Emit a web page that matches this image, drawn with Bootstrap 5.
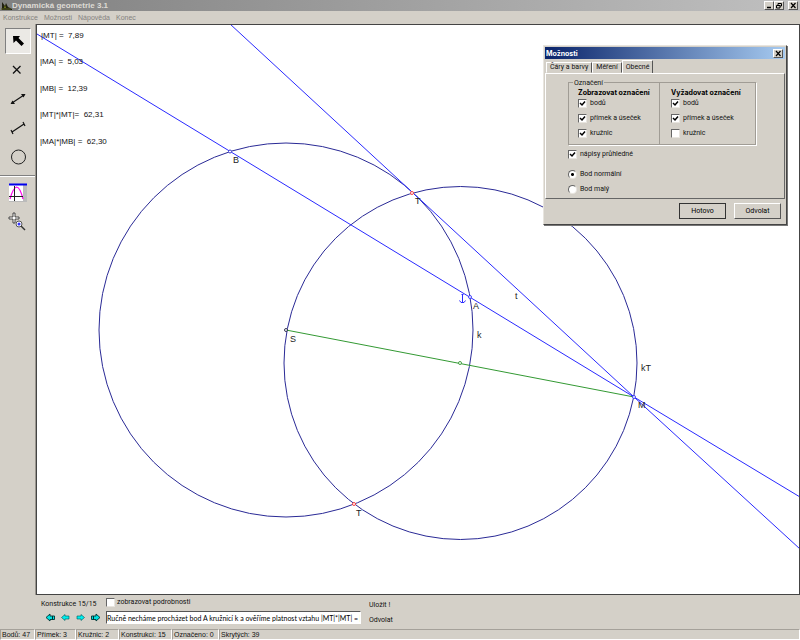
<!DOCTYPE html>
<html lang="cs">
<head>
<meta charset="utf-8">
<meta name="viewport" content="width=device-width, initial-scale=1">
<title>Dynamická geometrie 3.1</title>
<link href="https://cdn.jsdelivr.net/npm/bootstrap@5.3.0/dist/css/bootstrap.min.css" rel="stylesheet">
<script src="https://cdn.jsdelivr.net/npm/bootstrap@5.3.0/dist/js/bootstrap.bundle.min.js"></script>
<style>
:root{--face:#d4d0c8;--shade:#808080;--ink:#111}
body{font-family:"Liberation Sans",Arial,sans-serif;font-size:7px;line-height:9px;color:var(--ink);background:var(--face)}
button,input{font-family:inherit;font-size:7px;line-height:9px;color:inherit}
svg{display:block}
.raised{background:var(--face);border:1px solid;border-color:#fff #555 #555 #fff;border-radius:0}
.app-title{height:11px;font-size:8px;background:linear-gradient(90deg,#808080,#c0c0c0);color:#dedbd5;padding:0 2px 0 1px}
.win-btn{width:10px;height:9px;padding:0}
.app-menu{height:13px;padding:2px 3px;gap:6px}
.app-menu a{color:#84827f;text-decoration:none}
.tools{width:36px;border-right:1px solid #9a968f;padding-top:4px;gap:3px}
.tool{width:26px;height:26px;padding:0;margin-left:5px;border:1px solid transparent;background:none}
.tool.pressed{background:#ebe9e5;border-color:#808080 #fff #fff #808080}
.tool-sep{border-top:1px solid var(--shade);border-bottom:1px solid #fff;margin-top:2px}
.board{background:#fff;border:1px solid #444}
.board text{font-size:9px;fill:#222;white-space:pre}
.board .measure{font-size:8px;fill:#111}
.steps,.options{font-family:Roboto,"Liberation Sans",sans-serif}
.steps{height:34px;padding:3px 0 0 41px;gap:11px}
.step-nav{width:54px;padding-top:2px}
.nav-btn{border:0;background:none;padding:0;width:11px;height:9px}
.step-input{font-family:Lato,"Liberation Sans",sans-serif;width:255px;height:13px;padding:0;background:#fff;border:1px solid;border-color:#555 #fff #fff #555;border-radius:0;color:#000}
.tick-row{gap:2px}
.step-acts{padding:3px 0 0;margin-left:-3px;gap:6px}
.flat{border:0;background:none;padding:0}
.tick{appearance:none;width:9px;height:9px;margin:0;flex:none;background:#fff;border:1px solid;border-color:#666 #e8e5df #e8e5df #666}
.tick:checked{background:#fff url("data:image/svg+xml,%3Csvg xmlns='http://www.w3.org/2000/svg' viewBox='0 0 7 7'%3E%3Cpath d='M1 3L3 5L6 1.5' fill='none' stroke='%23000' stroke-width='1.5'/%3E%3C/svg%3E") center/7px no-repeat}
.tick[type=radio]{border-radius:50%}
.tick[type=radio]:checked{background:radial-gradient(circle,#000 1px,#fff 2px)}
.status{height:11px}
.status span{border:1px solid;border-color:#a5a19a #fff #fff #a5a19a;padding:0 1px;white-space:nowrap}
.w-a{width:35px}.w-b{width:41px}.w-c{width:43px}.w-d{width:53px}.w-e{width:47px}
.options{position:absolute;top:45px;right:13px;width:244px;height:180px;background:var(--face);border:1px solid;border-color:#e8e5df #444 #444 #e8e5df;box-shadow:1px 1px 0 #777;padding:1px}
.options-title,.col-head{font-family:Inter,"Liberation Sans",sans-serif}
.options-title{height:12px;background:linear-gradient(90deg,#0a246a,#a6caf0);color:#fff;padding:0 2px 0 1px}
.tabs{height:13px;padding-left:1px;margin-top:1px}
.tab-btn{height:11px;padding:0 3px;border:1px solid;border-color:#fff #555 transparent #fff;background:none;white-space:nowrap}
.tab-btn.on{height:13px;border-bottom:0;background:var(--face)}
.page{height:126px;border:1px solid;border-color:#fff #666 #666 #fff;padding:4px 28px 0 22px}
.group{border:1px solid #a09c95;box-shadow:1px 1px 0 #fff;height:63px;margin:4px 0 2px}
.group legend{font-size:7px;line-height:8px;width:auto;float:left;margin:-4px 0 0 4px;padding:0 1px;background:var(--face)}
.cols{clear:both}
.group-col{padding:0 0 0 9px}
.group-col.second{border-left:1px solid #a09c95;width:96px;margin-top:-4px;padding:4px 0 3px 11px}
.opt{display:flex;align-items:center;gap:3px;height:15px}
.col-head{font-weight:700;color:#000;height:9px;white-space:nowrap;margin-top:1px;margin-bottom:-1px}
.sizes{margin-top:5px}
.act{width:47px;height:16px;padding:0;color:#000}
.act.main{outline:1px solid #333;outline-offset:-1px;border-color:#333}
</style>
</head>
<body class="d-flex flex-column min-vh-100 position-relative">
<header>
  <div class="app-title d-flex align-items-center">
    <svg width="11" height="10" viewBox="0 0 11 10"><path d="M1 9V1L4 5L5 2L7 6L11 8V9Z" fill="#202010"/><path d="M3 7L4 4L5 7Z" fill="#778018"/><path d="M0 8H10" stroke="#555b20"/></svg>
    <strong>Dynamická geometrie 3.1</strong>
    <div class="d-flex ms-auto">
      <button class="win-btn raised" aria-label="Minimalizovat"><svg width="8" height="7"><path d="M2 5.500H6" stroke="#000" stroke-width="1.500"/></svg></button>
      <button class="win-btn raised" aria-label="Obnovit"><svg width="8" height="7"><path d="M3 3V1.500H6.500V4H5M1.500 3.500H5V6H1.500Z" fill="none" stroke="#000"/></svg></button>
      <button class="win-btn raised ms-1" aria-label="Zavřít"><svg width="8" height="7"><path d="M2 1L6.500 6M6.500 1L2 6" stroke="#000" stroke-width="1.200"/></svg></button>
    </div>
  </div>
  <nav class="app-menu d-flex"><a href="#">Konstrukce</a><a href="#">Možnosti</a><a href="#">Nápověda</a><a href="#">Konec</a></nav>
</header>
<main class="d-flex flex-fill">
  <aside class="tools d-flex flex-column flex-shrink-0">
    <button class="tool pressed" aria-label="Výběr"><svg width="24" height="24"><path d="M7 7H14L12.500 9L18 14.500L15.500 17L10 11.500L7.500 14Z" fill="#000"/></svg></button>
    <button class="tool" aria-label="Bod"><svg width="24" height="24"><path d="M7 8L14.500 15.500M14.500 8L7 15.500" stroke="#111" stroke-width="1.300"/></svg></button>
    <button class="tool" aria-label="Přímka"><svg width="24" height="24"><path d="M6 16L18 8" stroke="#111" stroke-width="1.200"/><path d="M4.500 17L6.500 13.500L9 17ZM19.500 7L17.500 10.500L15 7Z" fill="#111"/></svg></button>
    <button class="tool" aria-label="Úsečka"><svg width="24" height="24"><path d="M6 16L18 8M5 14L7 18M17 6L19 10" fill="none" stroke="#111" stroke-width="1.200"/></svg></button>
    <button class="tool" aria-label="Kružnice"><svg width="24" height="24"><circle cx="12.500" cy="12" r="7" fill="none" stroke="#222"/></svg></button>
    <div class="tool-sep"></div>
    <button class="tool" aria-label="Graf"><svg width="24" height="24"><path d="M3 3H21V21H3Z" fill="#bbb"/><path d="M3 4H17V20H3Z" fill="#fff"/><path d="M3 3.500H21" stroke="#00e" stroke-width="2"/><path d="M4 18Q7 7 10.500 6Q14 6 17 18" fill="none" stroke="#f0e" stroke-width="1.200"/><path d="M3 15.500H17M8.500 5V20" stroke="#222"/></svg></button>
    <button class="tool" aria-label="Lupa"><svg width="24" height="24"><path d="M7 3H9V7H13V9H9V13H7V9H3V7H7Z" fill="#fff" stroke="#222" stroke-width=".8"/><circle cx="13" cy="14" r="3" fill="#fff" stroke="#555"/><circle cx="13" cy="14" r="1.500" fill="#33f"/><path d="M15 16L19 20" stroke="#333" stroke-width="1.400"/></svg></button>
  </aside>
  <section class="board flex-fill" aria-label="Nákresna">
    <svg width="100%" viewBox="37 25 762 569">
      <g fill="none" stroke="#2a2a96"><circle cx="286" cy="330" r="187"/><circle cx="460.500" cy="363" r="176.500"/></g>
      <g stroke="#2a2aff"><path d="M37 34L634 397L800 497M230 24L412 192L634 397L800 549" fill="none"/><path d="M462.500 294V302M459.500 300.500L461 302.500H464L465.500 300.500M461.500 294.500H463.500" fill="none"/></g>
      <path d="M286 330L634 397" stroke="#339933"/>
      <g fill="#fff" stroke-width=".9"><circle cx="230" cy="151.500" r="1.500" stroke="#33c"/><circle cx="470" cy="297" r="1.500" stroke="#33f"/><circle cx="286" cy="330" r="1.500" stroke="#224"/><circle cx="460" cy="363" r="1.500" stroke="#393"/><circle cx="634" cy="397" r="1.500" stroke="#33f"/><circle cx="412" cy="193" r="1.500" stroke="#f33"/><circle cx="354" cy="504" r="1.500" stroke="#f33"/></g>
      <text class="measure" x="41" y="38">|MT| =  7,89</text><text class="measure" x="40" y="64">|MA| =  5,03</text><text class="measure" x="40" y="91">|MB| =  12,39</text><text class="measure" x="40" y="117">|MT|*|MT|=  62,31</text><text class="measure" x="40" y="144">|MA|*|MB| =  62,30</text>
      <text x="233" y="163">B</text><text x="415" y="204">T</text><text x="473" y="309">A</text><text x="477" y="338">k</text><text x="515" y="299">t</text><text x="290" y="342">S</text><text x="641" y="371">kT</text><text x="638" y="408">M</text><text x="356" y="516">T</text>
    </svg>
  </section>
</main>
<section class="steps d-flex">
  <div class="step-nav">
    <div class="text-nowrap" id="stepCount">Konstrukce 15/15</div>
    <div class="d-flex gap-1 pt-1 ps-1">
      <button class="nav-btn" aria-label="První"><svg width="11" height="9"><path d="M1 4.500L5 1V3H9.500V6.500H5V8Z" fill="#00e0e0" stroke="#033" stroke-width=".9"/><path d="M7.500 3V6.500" stroke="#033"/></svg></button>
      <button class="nav-btn" aria-label="Předchozí"><svg width="11" height="9"><path d="M1.500 4.500L5 1.500V3H9V6H5V7.500Z" fill="#0ee" stroke="#055" stroke-width=".6"/></svg></button>
      <button class="nav-btn" aria-label="Další"><svg width="11" height="9"><path d="M9.500 4.500L6 1.500V3H2V6H6V7.500Z" fill="#0ee" stroke="#055" stroke-width=".6"/></svg></button>
      <button class="nav-btn" aria-label="Poslední"><svg width="11" height="9"><path d="M10 4.500L6 1V3H1.500V6.500H6V8Z" fill="#00e0e0" stroke="#033" stroke-width=".9"/><path d="M3.500 3V6.500" stroke="#033"/></svg></button>
    </div>
  </div>
  <div>
    <div class="tick-row d-flex align-items-center"><input class="tick" type="checkbox" id="detail"><label for="detail">zobrazovat podrobnosti</label></div>
    <input class="step-input d-block mt-1" aria-labelledby="stepCount" value="Ručně necháme procházet bod A kružnicí k a ověříme platnost vztahu |MT|*|MT| = |">
  </div>
  <div class="step-acts d-flex flex-column align-items-start"><button class="flat">Uložit !</button><button class="flat">Odvolat</button></div>
</section>
<footer class="status d-flex"><span class="w-a">Bodů: 47</span><span class="w-b">Přímek: 3</span><span class="w-c">Kružnic: 2</span><span class="w-d">Konstrukcí: 15</span><span class="w-e">Označeno: 0</span><span class="flex-fill">Skrytých: 39</span></footer>

<div class="options" role="dialog" aria-labelledby="optTitle">
  <div class="options-title d-flex align-items-center"><strong id="optTitle">Možnosti</strong><button class="win-btn raised ms-auto" aria-label="Zavřít okno"><svg width="8" height="7"><path d="M2 1L6.500 6M6.500 1L2 6" stroke="#000" stroke-width="1.200"/></svg></button></div>
  <div class="tabs d-flex align-items-end" role="tablist"><button class="tab-btn" role="tab">Čáry a barvy</button><button class="tab-btn" role="tab">Měření</button><button class="tab-btn on" role="tab" aria-selected="true">Obecné</button></div>
  <div class="page">
    <fieldset class="group"><legend>Označení</legend>
      <div class="cols d-flex">
        <div class="group-col flex-fill"><div class="col-head">Zobrazovat označení</div>
          <label class="opt"><input class="tick" type="checkbox" checked>bodů</label><label class="opt"><input class="tick" type="checkbox" checked>přímek a úseček</label><label class="opt"><input class="tick" type="checkbox" checked>kružnic</label></div>
        <div class="group-col second"><div class="col-head">Vyžadovat označení</div>
          <label class="opt"><input class="tick" type="checkbox" checked>bodů</label><label class="opt"><input class="tick" type="checkbox" checked>přímek a úseček</label><label class="opt"><input class="tick" type="checkbox">kružnic</label></div>
      </div>
    </fieldset>
    <label class="opt"><input class="tick" type="checkbox" checked>nápisy průhledné</label>
    <div class="sizes"><label class="opt"><input class="tick" type="radio" name="size" checked>Bod normální</label><label class="opt"><input class="tick" type="radio" name="size">Bod malý</label></div>
  </div>
  <div class="d-flex justify-content-end gap-2 pt-1 pe-1"><button class="act main raised">Hotovo</button><button class="act raised">Odvolat</button></div>
</div>
</body>
</html>
